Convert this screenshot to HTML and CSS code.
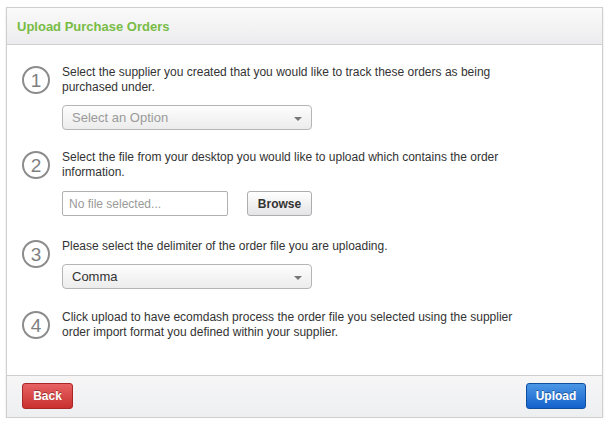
FILE: index.html
```html
<!DOCTYPE html>
<html>
<head>
<meta charset="utf-8">
<link rel="stylesheet" href="styles.css">
</head>
<body>
<div class="panel">
  <div class="panel-head">Upload Purchase Orders</div>
  <div class="panel-body">
    <div class="step">
      <div class="num">1</div>
      <div class="content">
        <p>Select the supplier you created that you would like to track these orders as being purchased under.</p>
        <div class="select placeholder"><span>Select an Option</span><i class="caret"></i></div>
      </div>
    </div>
    <div class="step">
      <div class="num">2</div>
      <div class="content">
        <p>Select the file from your desktop you would like to upload which contains the order information.</p>
        <div class="file-row">
          <div class="file-input">No file selected...</div>
          <button class="btn-browse">Browse</button>
        </div>
      </div>
    </div>
    <div class="step">
      <div class="num">3</div>
      <div class="content">
        <p>Please select the delimiter of the order file you are uploading.</p>
        <div class="select select-last"><span>Comma</span><i class="caret"></i></div>
      </div>
    </div>
    <div class="step">
      <div class="num">4</div>
      <div class="content">
        <p>Click upload to have ecomdash process the order file you selected using the supplier order import format you defined within your supplier.</p>
      </div>
    </div>
  </div>
  <div class="panel-foot">
    <button class="btn btn-red">Back</button>
    <button class="btn btn-blue">Upload</button>
  </div>
</div>
</body>
</html>
```

FILE: styles.css
```css
* { box-sizing: border-box; }
body {
  margin: 0;
  background: #fff;
  font-family: "Liberation Sans", Arial, sans-serif;
  font-size: 12px;
  color: #333;
}
.panel {
  margin: 7px 0 0 6px;
  width: 597px;
  border: 1px solid #cfcfcf;
  box-shadow: 0 1px 2px rgba(0,0,0,0.12);
}
.panel-head {
  height: 37px;
  padding: 0 10px;
  display: flex;
  align-items: center;
  font-size: 13px;
  font-weight: bold;
  color: #78bc45;
  background: linear-gradient(#fafafa, #ececee);
  border-bottom: 1px solid #cfcfcf;
}
.panel-body {
  padding: 20px 15px 35px;
  display: flex;
  flex-direction: column;
  gap: 20px;
}
.step {
  display: flex;
  gap: 12px;
  align-items: flex-start;
}
.num {
  flex: 0 0 28px;
  width: 28px;
  height: 28px;
  margin-top: 1px;
  border: 2px solid #8c8c8c;
  border-radius: 50%;
  display: flex;
  align-items: center;
  justify-content: center;
  font-size: 19px;
  color: #7f7f7f;
  line-height: 1;
}
.content { flex: 1; }
.content p {
  margin: 0;
  line-height: 15px;
  width: 480px;
}
.select {
  margin-top: 10px;
  width: 250px;
  height: 25px;
  border: 1px solid #b5b5b5;
  border-radius: 4px;
  background: linear-gradient(#fdfdfd, #ececec);
  display: flex;
  align-items: center;
  justify-content: space-between;
  padding: 0 9px 0 9px;
  font-size: 13px;
  color: #333;
}
.select.placeholder { color: #9a9a9a; }
.select-last { margin-bottom: 1px; }
.caret {
  width: 0;
  height: 0;
  border-left: 4px solid transparent;
  border-right: 4px solid transparent;
  border-top: 4px solid #777;
  margin-top: 2px;
}
.file-row {
  margin-top: 11px;
  margin-bottom: 3px;
  display: flex;
  gap: 19px;
}
.file-input {
  width: 166px;
  height: 25px;
  border: 1px solid #b0b0b0;
  border-radius: 2px;
  background: #fff;
  color: #9a9a9a;
  padding: 0 6px;
  display: flex;
  align-items: center;
  font-size: 12px;
}
.btn-browse {
  width: 65px;
  height: 25px;
  border: 1px solid #adadad;
  border-radius: 3px;
  background: linear-gradient(#ffffff, #e4e4e6);
  font-family: inherit;
  font-size: 12px;
  font-weight: bold;
  color: #333;
  padding: 0;
}
.panel-foot {
  border-top: 1px solid #cfcfcf;
  background: linear-gradient(#f6f6f7, #eeeff1);
  padding: 7px 16px 8px 15px;
  display: flex;
  justify-content: space-between;
}
.btn {
  height: 26px;
  border-radius: 3px;
  font-family: inherit;
  font-size: 12px;
  font-weight: bold;
  color: #fff;
  text-shadow: 0 -1px 0 rgba(0,0,0,0.35);
  padding: 0;
}
.btn-red {
  width: 51px;
  border: 1px solid #a8282a;
  background: linear-gradient(#e76264, #c9302f);
}
.btn-blue {
  width: 60px;
  border: 1px solid #0f4f9e;
  background: linear-gradient(#4b97e6, #1461cc);
}
```
